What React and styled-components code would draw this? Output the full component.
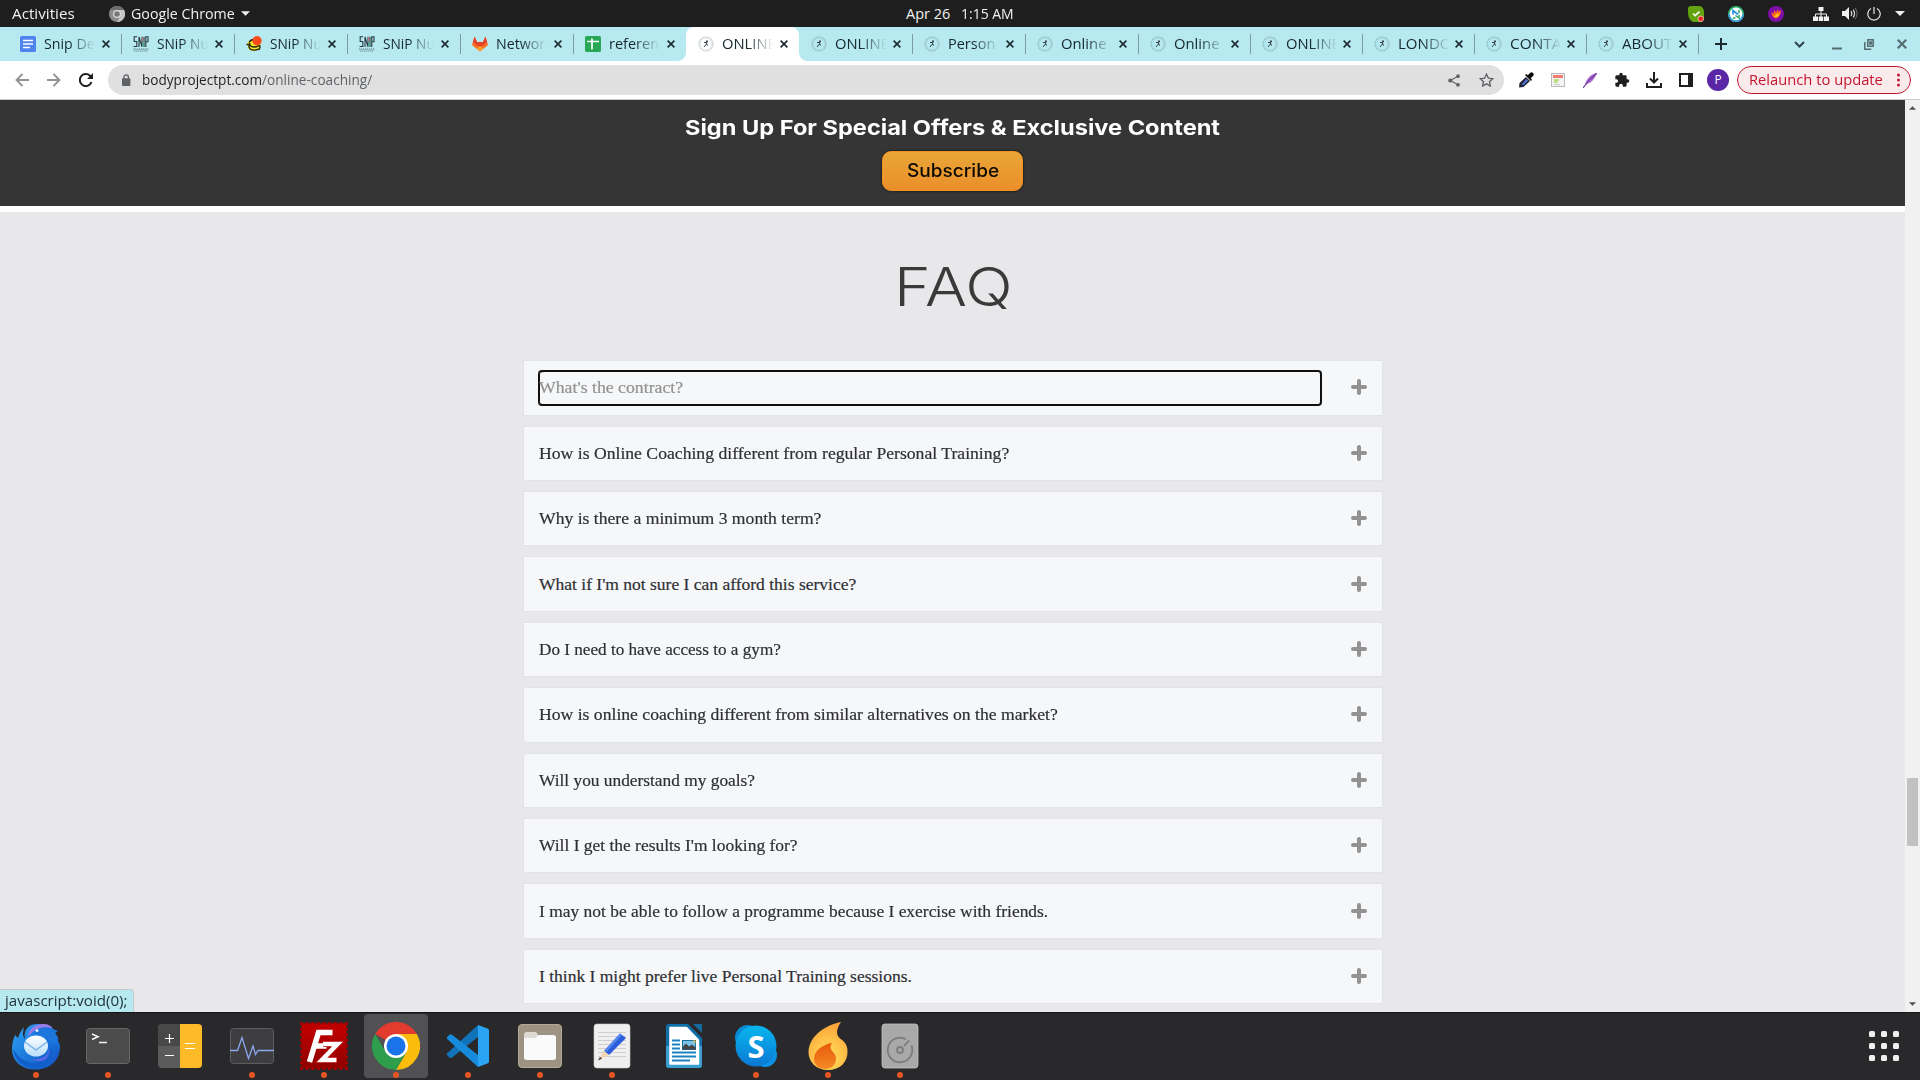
import React, { useLayoutEffect, useRef, useState } from 'react';
import styled, { createGlobalStyle, css } from 'styled-components';

const UI = '"Open Sans", "Noto Sans", sans-serif';
const HEADING = 'Inter, "Open Sans", sans-serif';
const SERIF = '"Liberation Serif", "Times New Roman", serif';

const GlobalStyle = createGlobalStyle`
  * { box-sizing: border-box; }
  body { margin: 0; overflow: hidden; }
  svg { display: block; flex: none; }
`;

/* ---------- text fitted to a given width ---------- */
const FitBox = styled.span`
  display: inline-block;
  flex: none;
  white-space: nowrap;
`;
const FitInner = styled.span`
  display: inline-block;
  transform-origin: 0 50%;
`;
function Fit({ w, children }) {
  const ref = useRef(null);
  const [scale, setScale] = useState(1);
  useLayoutEffect(() => {
    setScale(w / ref.current.offsetWidth);
  }, [w]);
  return (
    <FitBox style={{ width: w }}>
      <FitInner ref={ref} style={{ transform: `scaleX(${scale})` }}>{children}</FitInner>
    </FitBox>
  );
}

/* ---------- desktop ---------- */
const Desktop = styled.div`
  width: 1920px;
  height: 1080px;
  display: flex;
  flex-direction: column;
  overflow: hidden;
  background: #fff;
  font-family: ${UI};
`;

/* ---------- top bar ---------- */
const TopBar = styled.header`
  height: 27px;
  flex: none;
  display: grid;
  grid-template-columns: 906px 1fr auto;
  align-items: center;
  background: #1e1e1e;
  color: #f0f0f0;
  font-size: 14.5px;
  line-height: 27px;
`;
const TopLeft = styled.div`
  display: flex;
  align-items: center;
  padding-left: 12px;
`;
const AppMenu = styled.div`
  display: flex;
  align-items: center;
  gap: 6px;
  margin-left: 34px;
`;
const Clock = styled.div`
  display: flex;
  gap: 11px;
  line-height: 26px;
`;
const Tray = styled.div`
  display: flex;
  align-items: center;
  padding-right: 15px;
`;
const TrayCell = styled.span`
  width: ${(p) => p.$w}px;
  flex: none;
  display: flex;
  justify-content: center;
`;

/* ---------- browser tabs ---------- */
const TabStrip = styled.nav`
  height: 34px;
  flex: none;
  display: flex;
  align-items: center;
  padding-left: 8px;
  background: #b7e9f1;
`;
const Tab = styled.div`
  width: ${(p) => p.$w}px;
  height: 34px;
  flex: none;
  position: relative;
  display: flex;
  align-items: center;
  padding-left: 12px;
  color: #16282c;
  font-size: 14.5px;
  line-height: 33px;
  ${(p) => p.$sep && css`
    &::after {
      content: '';
      position: absolute;
      right: -1px;
      top: 7px;
      width: 1px;
      height: 20px;
      background: #7c9da3;
    }
  `}
  ${(p) => p.$active && css`
    background: #fff;
    border-radius: 8px 8px 0 0;
    &::before, &::after {
      content: '';
      position: absolute;
      bottom: 0;
      width: 8px;
      height: 8px;
    }
    &::before { left: -8px; background: radial-gradient(circle at 0 0, transparent 7.5px, #fff 8px); }
    &::after { right: -8px; background: radial-gradient(circle at 100% 0, transparent 7.5px, #fff 8px); }
  `}
`;
const TabTitle = styled.span`
  width: 55px;
  flex: none;
  margin-left: 8px;
  margin-right: ${(p) => (p.$tight ? 2 : 3)}px;
  height: 34px;
  -webkit-mask-image: linear-gradient(90deg, #000 25px, transparent 51px);
  mask-image: linear-gradient(90deg, #000 25px, transparent 51px);
`;
const TabButtons = styled.div`
  flex: 1;
  display: flex;
  align-items: center;
  padding: 0 13px 0 17px;
`;
const WindowButtons = styled.div`
  display: flex;
  align-items: center;
  margin-left: auto;
`;
const MinimizeCell = styled.span`
  width: 59px;
  display: flex;
  justify-content: center;
  padding-left: 4px;
`;

/* ---------- toolbar ---------- */
const Toolbar = styled.div`
  height: 39px;
  flex: none;
  display: flex;
  align-items: center;
  padding-left: 6px;
  background: #fff;
  border-bottom: 1px solid #c9cbcc;
`;
const Cell = styled.span`
  width: 32px;
  flex: none;
  display: flex;
  justify-content: center;
`;
const Omnibox = styled.div`
  width: 1396px;
  height: 30px;
  flex: none;
  display: flex;
  align-items: center;
  margin: 0 6px;
  padding: 0 2px 0 13px;
  border-radius: 15px;
  background: #e0e0e0;
  font-size: 14.5px;
  line-height: 30px;
  color: #5f6368;
`;
const Url = styled.div`
  display: flex;
  margin-left: 11px;
  flex: 1;
`;
const Domain = styled.span`color: #1f2023;`;
const Avatar = styled.span`
  width: 22px;
  height: 22px;
  border-radius: 50%;
  background: #5926a5;
  color: #fff;
  font-size: 12px;
  line-height: 22px;
  text-align: center;
`;
const Relaunch = styled.button`
  width: 174px;
  height: 28px;
  display: flex;
  align-items: center;
  gap: 15px;
  margin-left: 3px;
  padding: 0 0 0 10px;
  border: 1px solid #c5152e;
  border-radius: 14px;
  background: #f9ebeb;
  color: #c5152e;
  font: 14.5px/24px ${UI};
`;

/* ---------- page ---------- */
const Viewport = styled.div`
  height: 912px;
  flex: none;
  display: flex;
  position: relative;
`;
const Page = styled.main`
  flex: 1;
  display: flex;
  flex-direction: column;
  overflow: hidden;
`;
const Banner = styled.section`
  height: 106px;
  flex: none;
  display: flex;
  flex-direction: column;
  align-items: center;
  padding-top: 13px;
  margin-bottom: 6px;
  background: #353535;
  color: #fff;
  font-family: ${HEADING};
`;
const BannerTitle = styled.h3`
  margin: 0;
  font-size: 20.5px;
  font-weight: 700;
  line-height: 30px;
`;
const Subscribe = styled.button`
  width: 141px;
  height: 40px;
  margin-top: 8px;
  padding: 0 4px 0 0;
  border: 1px solid #ee9224;
  border-radius: 9px;
  background: linear-gradient(#e9a637, #eb8f2b);
  box-shadow: 0 0 2px 1px rgba(0, 0, 0, 0.35);
  color: #0c0a06;
  font: 500 18px/36px ${HEADING};
`;
const FaqSection = styled.section`
  flex: 1;
  display: flex;
  flex-direction: column;
  align-items: center;
  background: #e8e8ea;
`;
const FaqTitle = styled.h1`
  margin: 35px 0 33.3px;
  height: 80px;
  padding-left: 1px;
  font: 300 53px/80px ${HEADING};
  color: #3a3a3a;
`;
const FaqList = styled.ul`
  width: 860px;
  margin: 0;
  padding: 0;
  list-style: none;
  display: flex;
  flex-direction: column;
  gap: 10px;
`;
const FaqItem = styled.li`
  height: 55.4px;
  flex: none;
  display: flex;
  align-items: center;
  justify-content: space-between;
  padding: 0 15px 0 14.5px;
  border: 1px solid #e2e3e5;
  background: #f6f7f9;
`;
const Question = styled.a`
  width: 784px;
  height: 36px;
  padding: 0.4px 0 0 1px;
  border: 2px solid ${(p) => (p.$focus ? '#101010' : 'transparent')};
  border-width: 2px 2px 2px 0;
  border-radius: 4px;
  color: ${(p) => (p.$focus ? '#919191' : '#2e2f33')};
  font: 17.5px/31px ${SERIF};
  -webkit-text-stroke: 0.2px currentColor;
  ${(p) => p.$focus && css`box-shadow: inset 2px 0 0 #101010;`}
`;

/* ---------- scrollbar, status bubble ---------- */
const Scrollbar = styled.div`
  width: 15px;
  display: flex;
  flex-direction: column;
  align-items: center;
  padding: 6px 0;
  background: #f1f1f1;
`;
const Thumb = styled.div`
  width: 11px;
  height: 68px;
  margin: 668px 0 auto;
  background: #c1c1c1;
`;
const Status = styled.div`
  position: absolute;
  left: 0;
  bottom: 0;
  width: 134px;
  height: 23px;
  padding-left: 5px;
  border: solid #c3c7c9;
  border-width: 1px 1px 0 0;
  border-radius: 0 4px 0 0;
  background: #b7e9f1;
  color: #22343a;
  font-size: 14.5px;
  line-height: 21px;
`;

/* ---------- dock ---------- */
const Dock = styled.footer`
  height: 68px;
  flex: none;
  display: flex;
  align-items: flex-start;
  padding-top: 1px;
  border-top: 1px solid #151515;
  background: #29292b;
`;
const DockItem = styled.div`
  width: 64px;
  height: 64px;
  margin: 0 4px;
  flex: none;
  display: flex;
  flex-direction: column;
  align-items: center;
  padding-top: 8px;
  border-radius: 4px;
  background: ${(p) => (p.$active ? '#515153' : 'transparent')};
`;
const Running = styled.span`
  width: 6px;
  height: 6px;
  margin-top: 2px;
  border-radius: 50%;
  background: #e95420;
`;
const AppGrid = styled.div`
  display: grid;
  grid-template-columns: repeat(3, 6px);
  gap: 6px;
  margin: 17px 21px 0 auto;
`;
const GridDot = styled.span`
  width: 6px;
  height: 6px;
  border-radius: 1.5px;
  background: #f1f0ee;
`;

/* ---------- small icons ---------- */
const Caret = ({ color = '#f0f0f0', w = 10, h = 5, up }) => (
  <svg width={w} height={h} viewBox="0 0 10 5">
    <path d={up ? 'M0 5h10L5 0z' : 'M0 0h10L5 5z'} fill={color} />
  </svg>
);
const CloseX = ({ color = '#1c2b2f', size = 8, sw = 1.6 }) => (
  <svg width={size} height={size} viewBox="0 0 8 8">
    <path d="M.6.6l6.800 6.800M7.400.6L.6 7.400" stroke={color} strokeWidth={sw} />
  </svg>
);
const GreyChrome = () => (
  <svg width="16" height="16" viewBox="0 0 16 16">
    <circle cx="8" cy="8" r="8" fill="#8b8b8b" />
    <path d="M1 4a8 8 0 0 1 14 0H8z" fill="#6e6e6e" />
    <path d="M15 4a8 8 0 0 1-7 12l4-7-2-5z" fill="#c4c4c4" />
    <circle cx="8" cy="8" r="4" fill="#dedede" />
    <circle cx="8" cy="8" r="2.8" fill="#777" />
  </svg>
);

const favicons = {
  docs: (
    <svg width="16" height="16" viewBox="0 0 16 16">
      <rect width="16" height="16" rx="1.5" fill="#4f83ee" />
      <path d="M3 4.5h10M3 8h10M3 11.5h7" stroke="#fff" strokeWidth="1.7" />
    </svg>
  ),
  snip: (
    <svg width="16" height="16" viewBox="0 0 16 16">
      <path d="M4 .8H1.200v4.700h2.600v5H.6M6 11V.8l3 10V.8M11 11V.8M12.800 11V.8h2.200v5h-2" fill="none" stroke="#26393c" strokeWidth="1.100" />
      <path d="M9.600 1v4" stroke="#e46a6a" strokeWidth=".8" />
      <path d="M10.400 6v5" stroke="#3fbf8a" strokeWidth=".8" />
      <path d="M0 13.200h16M1 15h14" stroke="#6d8f95" strokeWidth="1.200" strokeDasharray="1.400 .6" />
    </svg>
  ),
  bee: (
    <svg width="16" height="16" viewBox="0 0 16 16">
      <path d="M1 8c1-3 4-5 8-5 4 1 6 4 5.500 7.500C14 13 11 15 8 15c-4 0-6-2-6-4z" fill="#f3e52b" />
      <path d="M.5 8.500h4M3 6.500c1-2 3-3 5-3M4 9.500c2 2 7 2 9 0M4 13c3 1.500 6 1.500 8.500 0M4 7c-2 3-1 6 2 7M13.500 9c1 2 0 4-1 5" fill="none" stroke="#1f2012" strokeWidth="1.300" />
      <circle cx="11" cy="4.800" r="4.700" fill="#ff4a1c" />
    </svg>
  ),
  gitlab: (
    <svg width="16" height="16" viewBox="0 0 16 16">
      <path d="M0 9L2.500.5 5 6h6L13.500.5 16 9l-8 6.500z" fill="#fc6d26" />
      <path d="M2.500.5L5 6h6L13.500.5 15 6l-7 6-7-6z" fill="#e24329" />
      <path d="M4.500 12.600L8 10l3.500 2.600L8 15.500z" fill="#fca326" />
    </svg>
  ),
  sheets: (
    <svg width="16" height="16" viewBox="0 0 16 16">
      <rect width="16" height="16" rx="1.500" fill="#27a857" />
      <path d="M2 5.500h12M7 2.500v11" stroke="#fff" strokeWidth="1.700" />
    </svg>
  ),
  body: (
    <svg width="16" height="16" viewBox="0 0 16 16">
      <circle cx="8" cy="8" r="7" fill="none" stroke="#5b7176" strokeOpacity=".36" strokeWidth="1.100" strokeDasharray="2.600 .6" />
      <circle cx="8" cy="8" r="5.800" fill="none" stroke="#5b7176" strokeOpacity=".16" strokeWidth=".8" />
      <circle cx="9" cy="5.200" r=".9" fill="#2c3a3d" />
      <path d="M6 6.600L9 6.300l-.6 2.300 1.600.6M8.400 8.300L7.200 9.300l-1.200 1.700" fill="none" stroke="#2c3a3d" strokeWidth="1" />
    </svg>
  ),
};

const tabs = [
  { icon: 'docs', title: 'Snip De', w: 51 },
  { icon: 'snip', title: 'SNiP Nu', w: 52 },
  { icon: 'bee', title: 'SNiP Nu', w: 52 },
  { icon: 'snip', title: 'SNiP Nu', w: 52 },
  { icon: 'gitlab', title: 'Networ', w: 49 },
  { icon: 'sheets', title: 'referen', w: 50 },
  { icon: 'body', title: 'ONLINE', w: 54, active: true },
  { icon: 'body', title: 'ONLINE', w: 54 },
  { icon: 'body', title: 'Person', w: 47 },
  { icon: 'body', title: 'Online', w: 46 },
  { icon: 'body', title: 'Online', w: 46 },
  { icon: 'body', title: 'ONLINE', w: 54 },
  { icon: 'body', title: 'LONDO', w: 54 },
  { icon: 'body', title: 'CONTA', w: 51 },
  { icon: 'body', title: 'ABOUT', w: 50 },
];

const questions = [
  ["What's the contract?", 144],
  ['How is Online Coaching different from regular Personal Training?', 470],
  ['Why is there a minimum 3 month term?', 282],
  ["What if I'm not sure I can afford this service?", 317],
  ['Do I need to have access to a gym?', 242],
  ['How is online coaching different from similar alternatives on the market?', 519],
  ['Will you understand my goals?', 216],
  ["Will I get the results I'm looking for?", 259],
  ['I may not be able to follow a programme because I exercise with friends.', 509],
  ['I think I might prefer live Personal Training sessions.', 373],
];

/* ---------- dock drawings, all on a 48 x 48 grid ---------- */
const Svg48 = ({ children }) => <svg width="48" height="48" viewBox="0 0 48 48">{children}</svg>;

const dockApps = [
  {
    name: 'mail', running: true,
    art: (
      <>
        <defs>
          <linearGradient id="tb" x1="0" y1="0" x2="1" y2="1"><stop offset="0" stopColor="#2ba4f4" /><stop offset="1" stopColor="#0f4fc4" /></linearGradient>
          <linearGradient id="env" x1="0" y1="0" x2="0" y2="1"><stop offset="0" stopColor="#fff" /><stop offset="1" stopColor="#b9ddfa" /></linearGradient>
        </defs>
        <path d="M12 5C9 9 7 12 6 16L3 13C1 18 0 22 0 27c0 12 10 21 24 20.500C38 47.500 48 38 48 25c0-3-1-5-2-6 1-4-1-7-5-7l5-3c-2-1-5-2-7-2-3-4-9-5-14-5-8 0-14 6-12 15-3-4-2-7-1-12z" fill="url(#tb)" />
        <path d="M16 14C17 7 23 2 31 2c5 0 9 2 10 5-8-1-15-1-25 7z" fill="#9a7bea" />
        <path d="M19 12c5-6 13-8 21-6 4 4 6 10 5 17l-8-2c-3-6-8-9-18-9z" fill="#1c76db" />
        <path d="M1 27c5 8 10 12 19 14 12 0 20-6 19-16 5 9 0 19-14 21C12 47 3 39 1 27z" fill="#135fca" />
        <path d="M20 37c10 1 17-3 17-11 2 10-7 17-17 11z" fill="#5b67e4" />
        <ellipse cx="24" cy="24" rx="12" ry="10.500" fill="url(#env)" />
        <path d="M13 20l11 8 11-8" fill="none" stroke="#7db3e8" strokeWidth="1.500" />
        <circle cx="25" cy="8.500" r="1.500" fill="#d8ecff" />
      </>
    ),
  },
  {
    name: 'terminal', running: true,
    art: (
      <>
        <rect x="2.500" y="6.500" width="43" height="35" rx="3" fill="#4b4b4b" stroke="#676767" />
        <path d="M8 12l6 2.800L8 17.500" fill="none" stroke="#f1f1f1" strokeWidth="1.600" />
        <path d="M15 20.500h8" stroke="#f1f1f1" strokeWidth="1.500" />
      </>
    ),
  },
  {
    name: 'calculator',
    art: (
      <>
        <rect x="2" y="2" width="44" height="44" rx="4" fill="#5b5b5b" />
        <path d="M6 2h18v22H2V6a4 4 0 0 1 4-4z" fill="#484848" />
        <path d="M24 2h18a4 4 0 0 1 4 4v36a4 4 0 0 1-4 4H24z" fill="#fdbb27" />
        <path d="M9 16.500h9M13.500 12v9M9 33.500h9M29 21.500h10M29 26.500h10" stroke="#fff" strokeWidth="1.200" />
      </>
    ),
  },
  {
    name: 'monitor', running: true,
    art: (
      <>
        <rect x="2.500" y="6.500" width="43" height="35" rx="3" fill="#3e3e41" stroke="#5d5d5d" />
        <path d="M2 28.500h7.500L14 15.500l6.500 21L25 24l2.500 8.500 2.500-4h16" fill="none" stroke="#8aa9ee" strokeWidth="1.300" />
      </>
    ),
  },
  {
    name: 'filezilla', running: true,
    art: (
      <>
        <defs><linearGradient id="fz" x1="0" y1="0" x2="0" y2="1"><stop offset="0" stopColor="#c40000" /><stop offset="1" stopColor="#8e0000" /></linearGradient></defs>
        <rect x="1.500" y="1.500" width="45" height="45" fill="url(#fz)" />
        <rect x="1.500" y="1.500" width="45" height="45" fill="none" stroke="#a80000" strokeWidth="3.400" strokeLinecap="round" strokeDasharray="0 5.625" />
        <path d="M32.500 10.500H18.500L9.500 40M14.500 24h12" fill="none" stroke="#fff" strokeWidth="5.500" />
        <path d="M23 21.500h16L22.500 37.500h14.500" fill="none" stroke="#b00000" strokeWidth="7" />
        <path d="M23 22h14.500L22 38h14.500" fill="none" stroke="#fff" strokeWidth="4.600" />
      </>
    ),
  },
  {
    name: 'chrome', running: true, active: true,
    art: (
      <>
        <path d="M24 24L3.200 12a24 24 0 0 1 41.600 0z" fill="#e33b2e" />
        <path d="M24 12h20.800A24 24 0 0 1 24 48l10.400-18z" fill="#fbbc0b" />
        <path d="M13.600 30L3.200 12A24 24 0 0 0 24 48l10.400-18z" fill="#2f9e4c" />
        <circle cx="24" cy="24" r="12" fill="#fff" />
        <circle cx="24" cy="24" r="9.500" fill="#1a73e8" />
      </>
    ),
  },
  {
    name: 'code', running: true,
    art: (
      <>
        <path d="M34 3L3.200 31.200q-1 1 0 2l2.200 2.200q1.200 1 2.600 0L34 15z" fill="#1173ba" />
        <path d="M34 45L3.200 17q-1-1 0-2l2.200-2.200q1.200-1 2.600 0L34 33z" fill="#178bdb" />
        <path d="M34 3l10 3.800q1 .5 1 1.800v30.800q0 1.300-1 1.800L34 45z" fill="#2ba5f3" />
      </>
    ),
  },
  {
    name: 'files', running: true,
    art: (
      <>
        <rect x="2.500" y="2.500" width="43" height="43" rx="3.500" fill="#9c9382" stroke="#b2aa99" />
        <path d="M8 13a2.500 2.500 0 0 1 2.500-3H20l3 4h13v8H8z" fill="#dedad1" />
        <path d="M8 16h11l4-3h14.500a2.500 2.500 0 0 1 2.500 2.500v20a2.500 2.500 0 0 1-2.500 2.500h-27A2.500 2.500 0 0 1 8 35.500z" fill="#fafafa" />
      </>
    ),
  },
  {
    name: 'editor', running: true,
    art: (
      <>
        <rect x="6" y="2" width="36" height="44" rx="3" fill="#efefef" stroke="#cfcfcf" strokeWidth=".6" />
        <path d="M10 10.500h28M10 14.500h28M10 18.500h28M10 22.500h28M10 26.500h28M10 30.500h28M10 34.500h28" stroke="#cfcfcf" />
        <path d="M16 29L32 11.500l6 4.500-17 17z" fill="#2c5ddb" />
        <path d="M16 29L32 11.500l2 1.500-16 17.500z" fill="#5585ee" />
        <path d="M10 38.500L16 29l5 4z" fill="#f6d5b2" />
        <path d="M10 38.500l2-3.500 2 1.600z" fill="#333" />
      </>
    ),
  },
  {
    name: 'writer',
    art: (
      <>
        <path d="M9 2h19l14 14v27a3 3 0 0 1-3 3H9a3 3 0 0 1-3-3V5a3 3 0 0 1 3-3z" fill="#0f6fa8" />
        <path d="M6 24h36v19a3 3 0 0 1-3 3H9a3 3 0 0 1-3-3z" fill="#3a9ed0" />
        <path d="M33 2h9v9z" fill="#14699f" />
        <path d="M10 5.500h16.500L38.500 18v24H10z" fill="#fff" stroke="#fff" strokeWidth="1.500" strokeLinejoin="round" />
        <path d="M12 18.500h8M12 22.500h8M12 26.500h8M12 30.500h24M12 34.500h24M12 38.500h18" stroke="#1b83bf" strokeWidth="2" />
        <rect x="22.500" y="18.500" width="13" height="9" fill="#7cc4ea" stroke="#1b6f9f" />
        <path d="M23 27.500v-3l3-3 3 3 3-2 3.500 3v2z" fill="#444" />
        <path d="M32.500 18.500h3v3z" fill="#fbc02d" />
      </>
    ),
  },
  {
    name: 'skype', running: true,
    art: (
      <>
        <defs><linearGradient id="sk" x1="0" y1="0" x2="0" y2="1"><stop offset="0" stopColor="#08b7ef" /><stop offset="1" stopColor="#0b78d4" /></linearGradient></defs>
        <circle cx="15.500" cy="15.500" r="12.500" fill="#0a8ad2" />
        <circle cx="33" cy="33" r="12" fill="#0c92e4" />
        <circle cx="24" cy="24" r="20.500" fill="url(#sk)" />
        <text x="24" y="35.500" textAnchor="middle" fontFamily="Open Sans, sans-serif" fontWeight="700" fontSize="31" fill="#fff">S</text>
      </>
    ),
  },
  {
    name: 'flame', running: true,
    art: (
      <>
        <defs>
          <radialGradient id="fl" cx=".5" cy=".75" r=".7"><stop offset="0" stopColor="#ffe45c" /><stop offset="1" stopColor="#fda63a" /></radialGradient>
          <linearGradient id="fi" x1="0" y1="0" x2="0" y2="1"><stop offset="0" stopColor="#e8590c" /><stop offset="1" stopColor="#f58a26" /></linearGradient>
        </defs>
        <path d="M37 0C25 2 5 12 4.500 30 4.500 40 12 48 24 48c12 0 20-8 19.500-19 0-7-4-10-8-13-3-3-4-8 1.500-16z" fill="url(#fl)" />
        <path d="M28 21c-8 1-18 7-18 16 0 6 5 10 11 10s11-4 11-10c0-4-2-6-4-8-2-3-2-5 0-8z" fill="url(#fi)" />
      </>
    ),
  },
  {
    name: 'disk', running: true,
    art: (
      <>
        <rect x="6" y="2" width="36" height="44" rx="3" fill="#a9a9a9" stroke="#c4c4c4" strokeWidth=".8" />
        <circle cx="24" cy="28" r="3" fill="none" stroke="#7c7c7c" strokeWidth="1.800" />
        <path d="M35.500 23.500A12.300 12.300 0 1 1 30 17.200M28 24l5-5.500" fill="none" stroke="#7c7c7c" strokeWidth="1.800" />
      </>
    ),
  },
];

export default function App() {
  return (
    <Desktop>
      <GlobalStyle />
      <TopBar>
        <TopLeft>
          <Fit w={63}>Activities</Fit>
          <AppMenu>
            <GreyChrome />
            <Fit w={104}>Google Chrome</Fit>
            <Caret w={9} />
          </AppMenu>
        </TopLeft>
        <Clock>
          <Fit w={44}>Apr 26</Fit>
          <Fit w={53}>1:15 AM</Fit>
        </Clock>
        <Tray>
          <TrayCell $w={40}>
            <svg width="16" height="16" viewBox="0 0 16 16">
              <path d="M3 0h8c3 0 5 3 5 6v5c0 3-2 5-5 5H6c-2 0-4-2-5-4S0 6 0 3c0-2 1-3 3-3z" fill="#62a30f" />
              <path d="M5 7.500L7.200 9.700l4.300-4" fill="none" stroke="#fff" strokeWidth="1.600" />
              <circle cx="12.800" cy="12.800" r="2.800" fill="#ee2222" stroke="#fff" strokeWidth=".6" />
            </svg>
          </TrayCell>
          <TrayCell $w={40}>
            <svg width="16" height="16" viewBox="0 0 16 16">
              <circle cx="8" cy="8" r="7.200" fill="#fff" stroke="#2fb36f" strokeWidth="1.600" />
              <path d="M.8 8A7.200 7.200 0 0 0 15.200 8" fill="none" stroke="#3a9fe8" strokeWidth="1.600" />
              <path d="M5 8.500V4.500l5 4" fill="none" stroke="#2a8fe0" strokeWidth="1.700" />
              <path d="M11 4v3.500M5 12h2.500M7.500 9.500L11 12V9" fill="none" stroke="#28a86a" strokeWidth="1.500" />
            </svg>
          </TrayCell>
          <TrayCell $w={40}>
            <svg width="16" height="16" viewBox="0 0 16 16">
              <circle cx="8" cy="8" r="8" fill="#7d0fa8" />
              <path d="M3.500 6l1.800 2 1.200-4 1.500 3 2-4 .5 3L13 4c0 4-2 7.500-5 8.500C5.500 12 3.500 10 3.500 6z" fill="#ff6a1c" />
              <path d="M5.500 9.500L7 10l2-3 1 1.500L12 7c-.5 2.500-2 4-4 4-1.200 0-2-.5-2.500-1.500z" fill="#ffc21e" />
            </svg>
          </TrayCell>
          <TrayCell $w={50}>
            <svg width="16" height="14" viewBox="0 0 16 14">
              <path d="M5.500 0h5v4h-5zM0 9.500h5V14H0zM5.700 9.500h4.600V14H5.700zM11 9.500h5V14h-5z" fill="#f0f0f0" />
              <path d="M8 4v6M2.500 10V7h11v3" fill="none" stroke="#f0f0f0" />
            </svg>
          </TrayCell>
          <TrayCell $w={7}>
            <svg width="16" height="13" viewBox="0 0 16 13">
              <path d="M0 4h3l4-4v13L3 9H0z" fill="#f0f0f0" />
              <path d="M9 4.200c1 1.400 1 3.200 0 4.600M11.200 2.600c1.700 2.400 1.700 5.400 0 7.800" fill="none" stroke="#ddd" strokeWidth="1.200" />
              <path d="M13.200 1c2.400 3.400 2.400 7.600 0 11" fill="none" stroke="#777" />
            </svg>
          </TrayCell>
          <TrayCell $w={42}>
            <svg width="14" height="14" viewBox="0 0 14 14">
              <path d="M4 1.500a6.200 6.200 0 1 0 6 0M7 0v7" fill="none" stroke="#e6e6e6" strokeWidth="1.200" />
            </svg>
          </TrayCell>
          <Caret />
        </Tray>
      </TopBar>

      <TabStrip>
        {tabs.map((t, i) => (
          <Tab key={i} $w={i < 10 ? 113 : 112} $active={t.active} $sep={i !== 5 && i !== 6}>
            {favicons[t.icon]}
            <TabTitle $tight={i >= 10}><Fit w={t.w}>{t.title}</Fit></TabTitle>
            <CloseX />
          </Tab>
        ))}
        <TabButtons>
          <svg width="12" height="12" viewBox="0 0 12 12"><path d="M6 0v12M0 6h12" stroke="#1c2b2f" strokeWidth="2" /></svg>
          <WindowButtons>
            <svg width="11" height="7" viewBox="0 0 11 7"><path d="M1 1l4.500 4.500L10 1" fill="none" stroke="#2e464b" strokeWidth="2" /></svg>
            <MinimizeCell>
              <svg width="10" height="12" viewBox="0 0 10 12"><path d="M0 10.500h10" stroke="#556c70" strokeWidth="2" /></svg>
            </MinimizeCell>
            <svg width="10" height="11" viewBox="0 0 10 11">
              <path d="M3.800.8h5.400v6.400H3.800zM.8 3v7.200h6.400M5.800 3h1.600v2H5.800z" fill="none" stroke="#556c70" strokeWidth="1.500" />
            </svg>
            <TrayCell $w={23} />
            <CloseX color="#556c70" size={10} sw={1.7} />
          </WindowButtons>
        </TabButtons>
      </TabStrip>

      <Toolbar>
        <Cell><svg width="14" height="14" viewBox="0 0 14 14"><path d="M14 7H1.500M7.500 1L1.500 7l6 6" fill="none" stroke="#929292" strokeWidth="1.800" /></svg></Cell>
        <Cell><svg width="14" height="14" viewBox="0 0 14 14"><path d="M0 7h12.500M6.500 1l6 6-6 6" fill="none" stroke="#929292" strokeWidth="1.800" /></svg></Cell>
        <Cell>
          <svg width="14" height="14" viewBox="0 0 14 14">
            <path d="M12.500 9A6 6 0 1 1 11 2.700l1.200 1.300" fill="none" stroke="#1f1f22" strokeWidth="2" />
            <path d="M14 0v6H8z" fill="#1f1f22" />
          </svg>
        </Cell>
        <Omnibox>
          <svg width="10" height="12" viewBox="0 0 10 12">
            <rect x="1" y="4.200" width="8.400" height="7.800" rx="1" fill="#5f6368" />
            <path d="M3 5V3a2.200 2.200 0 0 1 4.400 0v2" fill="none" stroke="#5f6368" strokeWidth="1.300" />
          </svg>
          <Url>
            <Domain><Fit w={120}>bodyprojectpt.com</Fit></Domain>
            <Fit w={110}>/online-coaching/</Fit>
          </Url>
          <Cell>
            <svg width="12" height="13" viewBox="0 0 12 13">
              <path d="M10 2.200L2.200 6.500 10 10.800" fill="none" stroke="#5f6368" strokeWidth="1.200" />
              <circle cx="10" cy="2.200" r="1.900" fill="#5f6368" /><circle cx="2.200" cy="6.500" r="2" fill="#5f6368" /><circle cx="10" cy="10.800" r="1.900" fill="#5f6368" />
            </svg>
          </Cell>
          <Cell>
            <svg width="15" height="14" viewBox="0 0 15 14">
              <path d="M7.500 1.200l1.900 4 4.300.5-3.200 3 .8 4.300-3.800-2.100L3.700 13l.8-4.300-3.200-3 4.300-.5z" fill="none" stroke="#5f6368" strokeWidth="1.400" />
            </svg>
          </Cell>
        </Omnibox>
        <Cell>
          <svg width="16" height="16" viewBox="0 0 16 16">
            <path d="M8 5l4 4-6.500 6L1 15.500 1.500 11z" fill="#23263a" />
            <path d="M8.500 7L10 8.500 5.500 13 3.500 13z" fill="#5a78e8" />
            <path d="M7 3l6 6 1-1.200-1.300-1.500L15 4c1-1 1-2 0-3s-2-1-3 0L9.800 3.300 8.300 2z" fill="#0a0a0a" />
          </svg>
        </Cell>
        <Cell>
          <svg width="14" height="14" viewBox="0 0 14 14">
            <rect x=".5" y=".5" width="13" height="13" fill="#f3f3f3" stroke="#b9b9b9" />
            <path d="M2 2h10v3H2z" fill="#f47a70" />
            <path d="M3 7h5M3 9h3.500" stroke="#a6d65c" strokeWidth="1.300" />
            <path d="M3 11.500h6" stroke="#ccc" />
          </svg>
        </Cell>
        <Cell>
          <svg width="14" height="15" viewBox="0 0 14 15">
            <path d="M14 0C8 1 4 5 2 11c4 0 8-3 9.500-6C12.500 3 13.500 2 14 0z" fill="#b06ad4" />
            <path d="M14 0C8 5 4 9 0 15" fill="none" stroke="#6f3b96" strokeWidth="1.200" />
          </svg>
        </Cell>
        <Cell>
          <svg width="16" height="16" viewBox="0 0 24 24">
            <path fill="#1f1f22" d="M20.500 11H19V7a2 2 0 0 0-2-2h-4V3.500a2.500 2.500 0 0 0-5 0V5H4a2 2 0 0 0-2 2v3.800h1.500a2.700 2.700 0 0 1 0 5.400H2V20a2 2 0 0 0 2 2h3.800v-1.500a2.700 2.700 0 0 1 5.400 0V22H17a2 2 0 0 0 2-2v-4h1.500a2.500 2.500 0 0 0 0-5z" />
          </svg>
        </Cell>
        <Cell>
          <svg width="16" height="16" viewBox="0 0 16 16">
            <path d="M8 0v10M4 6.500L8 10.500l4-4M1 11v4h14v-4" fill="none" stroke="#1f1f22" strokeWidth="2" />
          </svg>
        </Cell>
        <Cell>
          <svg width="14" height="14" viewBox="0 0 14 14">
            <path d="M1 1h12v12H1z" fill="none" stroke="#1f1f22" strokeWidth="2" /><path d="M9 1h4v12H9z" fill="#1f1f22" />
          </svg>
        </Cell>
        <Cell><Avatar>P</Avatar></Cell>
        <Relaunch>
          <Fit w={134}>Relaunch to update</Fit>
          <svg width="3" height="14" viewBox="0 0 3 14"><circle cx="1.500" cy="2" r="1.500" fill="#c5152e" /><circle cx="1.500" cy="7" r="1.500" fill="#c5152e" /><circle cx="1.500" cy="12" r="1.500" fill="#c5152e" /></svg>
        </Relaunch>
      </Toolbar>

      <Viewport>
        <Page>
          <Banner>
            <BannerTitle><Fit w={535}>Sign Up For Special Offers &amp; Exclusive Content</Fit></BannerTitle>
            <Subscribe><Fit w={92}>Subscribe</Fit></Subscribe>
          </Banner>
          <FaqSection>
            <FaqTitle><Fit w={119}>FAQ</Fit></FaqTitle>
            <FaqList>
              {questions.map(([text, w], i) => (
                <FaqItem key={text}>
                  <Question $focus={i === 0}><Fit w={w}>{text}</Fit></Question>
                  <svg width="16" height="17" viewBox="0 0 16 17">
                    <path d="M8 2v12M2 8h12" stroke="#929292" strokeWidth="4" strokeLinecap="round" />
                  </svg>
                </FaqItem>
              ))}
            </FaqList>
          </FaqSection>
        </Page>
        <Scrollbar>
          <Caret color="#505050" w={7} h={4} up />
          <Thumb />
          <Caret color="#505050" w={7} h={4} />
        </Scrollbar>
        <Status><Fit w={122}>javascript:void(0);</Fit></Status>
      </Viewport>

      <Dock>
        {dockApps.map((a) => (
          <DockItem key={a.name} $active={a.active}>
            <Svg48>{a.art}</Svg48>
            {a.running && <Running />}
          </DockItem>
        ))}
        <AppGrid>
          {Array.from({ length: 9 }, (_, i) => <GridDot key={i} />)}
        </AppGrid>
      </Dock>
    </Desktop>
  );
}
